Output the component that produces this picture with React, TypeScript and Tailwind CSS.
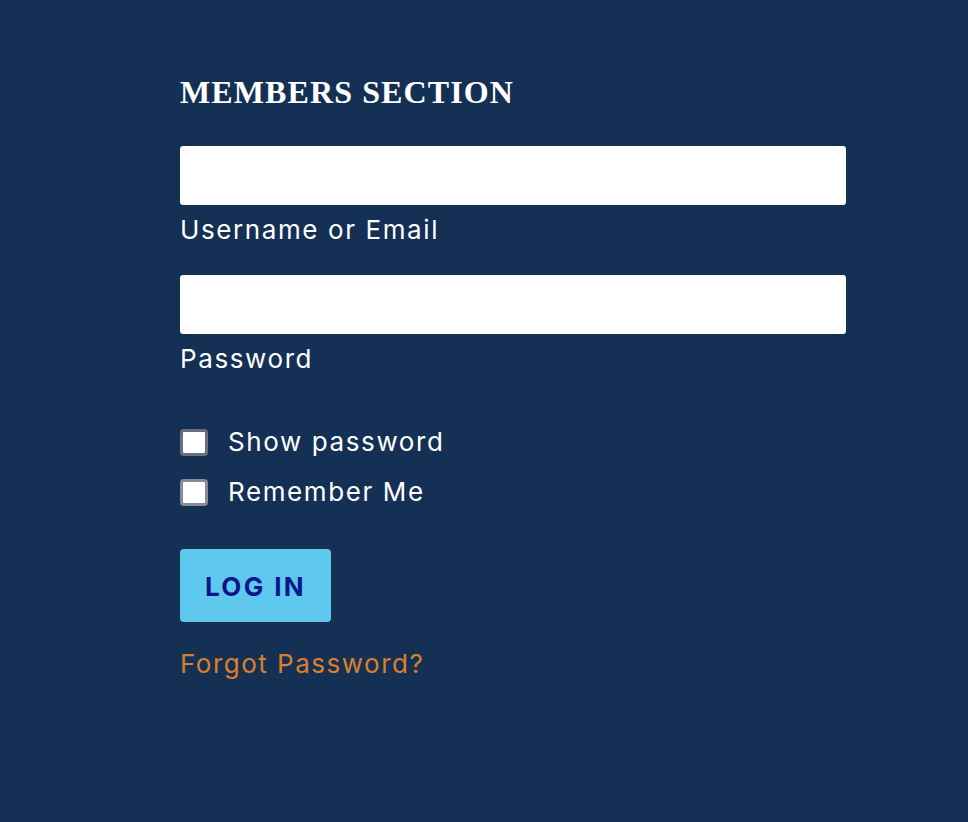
import React, { useState } from 'react';

function Field({ label, type }: { label: string; type: string }) {
  return (
    <div className="flex flex-col">
      <input
        type={type}
        className="h-[59px] w-full rounded-[3px] bg-white px-3 text-[20px] text-black outline-none"
      />
      <label className="mt-[8px] text-[26px] leading-[34px] tracking-[1.6px] text-white">{label}</label>
    </div>
  );
}

function Check({ label, tone }: { label: string; tone: string }) {
  const [on, setOn] = useState(false);
  return (
    <label className="flex items-center gap-[20px] cursor-pointer">
      <span
        onClick={() => setOn(!on)}
        className={`flex h-[27px] w-[28px] items-center justify-center rounded-[4px] border-[3px] bg-white ${tone}`}
      >
        {on && <span className="h-[11px] w-[11px] bg-[#153055]" />}
      </span>
      <span className="text-[26px] leading-[34px] tracking-[1.6px] text-white">{label}</span>
    </label>
  );
}

export default function App() {
  return (
    <div className="min-h-[822px] w-full bg-[#153055] font-['Inter',_'Liberation_Sans',_sans-serif]">
      <div className="w-[666px] ml-[180px] pt-[74px]">
        <h2 className="text-[32px] font-bold leading-[36px] tracking-[1.1px] text-white font-['Liberation_Serif',_serif]">
          MEMBERS SECTION
        </h2>
        <div className="mt-[36px] flex flex-col gap-[28px]">
          <Field label="Username or Email" type="text" />
          <Field label="Password" type="password" />
        </div>
        <div className="mt-[49px] flex flex-col gap-[16px]">
          <Check label="Show password" tone="border-[#6c6d7d]" />
          <Check label="Remember Me" tone="border-[#8a8b99]" />
        </div>
        <button className="mt-[40px] h-[73px] w-[151px] rounded-[4px] bg-[#5fc8ef] pt-[2px] text-[26px] font-bold tracking-[2.4px] text-[#0b168a]">
          LOG IN
        </button>
        <div className="mt-[25px]">
          <a href="#" className="text-[26px] leading-[34px] tracking-[1.5px] text-[#dc7f2c]">
            Forgot Password?
          </a>
        </div>
      </div>
    </div>
  );
}
